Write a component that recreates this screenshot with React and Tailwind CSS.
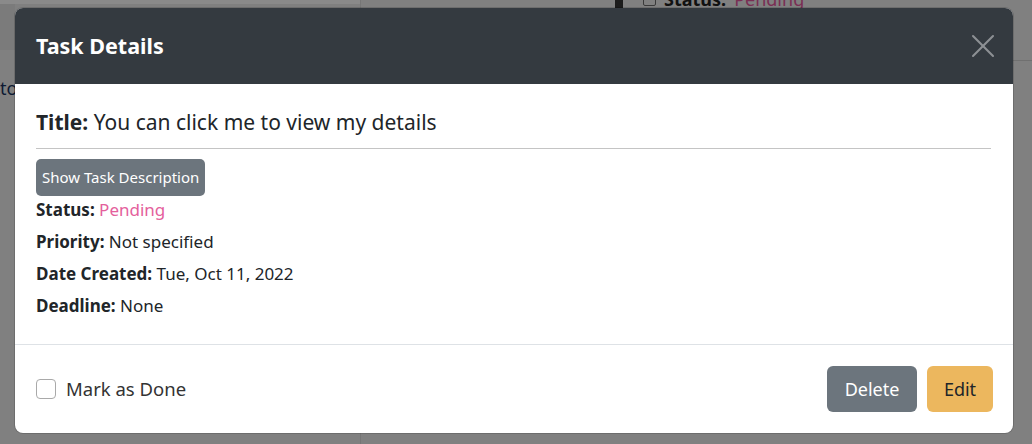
import { X } from 'lucide-react';

const Row = ({ label, children }) => (
    <div className="h-[24px] leading-[24px] text-[17px] text-[#212529]">
        <span className="font-bold">{label}</span> {children}
    </div>
);

const TaskModal = () => {
    return (
        <div className="absolute left-[15px] top-[8px] w-[998px] h-[425px] bg-white rounded-[8px] flex flex-col shadow-[0_0_0_1px_rgba(0,0,0,0.15)]">
            {/* Header */}
            <div className="h-[76px] shrink-0 bg-[#343a40] rounded-t-[8px] flex items-center justify-between pl-[21px] pr-[10px]">
                <h5 className="text-white text-[21.5px] font-bold">Task Details</h5>
                <button className="w-[40px] h-[40px] flex items-center justify-center text-[#8d9094]">
                    <X className="w-[40px] h-[40px]" strokeWidth={1.25} />
                </button>
            </div>

            {/* Body */}
            <div className="flex-1 px-[21px] pt-[24px]">
                <div className="text-[21px] leading-[28px] text-[#212529]">
                    <span className="font-bold">Title:</span> You can click me to view my details
                </div>
                <div className="h-px bg-[#c4c4c4] mt-[12px] mr-[1px]" />
                <button className="mt-[10px] mb-[2px] h-[37px] px-[6px] bg-[#6c757d] text-white text-[15px] rounded-[5px]">
                    Show Task Description
                </button>
                <div className="flex flex-col gap-[8px]">
                    <Row label="Status:">
                        <span className="text-[#e4609c]">Pending</span>
                    </Row>
                    <Row label="Priority:">Not specified</Row>
                    <Row label="Date Created:">Tue, Oct 11, 2022</Row>
                    <Row label="Deadline:">None</Row>
                </div>
            </div>

            {/* Footer */}
            <div className="h-[89px] shrink-0 border-t border-[#dee2e6] flex items-center justify-between pl-[21px] pr-[20px]">
                <label className="flex items-center gap-[10px] text-[18.5px] text-[#333]">
                    <span className="w-[20px] h-[20px] rounded-[4px] border border-[#a9a9a9] bg-white" />
                    Mark as Done
                </label>
                <div className="flex gap-[10px]">
                    <button className="h-[46px] w-[90px] bg-[#6c757d] text-white text-[18px] rounded-[6px]">Delete</button>
                    <button className="h-[46px] w-[66px] bg-[#ecb75e] text-[#212529] text-[18px] rounded-[6px]">Edit</button>
                </div>
            </div>
        </div>
    );
};

export default function App() {
    return (
        <div className="relative w-[1032px] h-[444px] overflow-hidden bg-[#808080] font-['Noto_Sans',sans-serif]">
            {/* page behind the backdrop */}
            <div className="flex h-full">
                <div className="w-[361px] border-r border-[#767676] flex flex-col">
                    <div className="h-[4px] bg-[#8a8a8a]" />
                    <div className="w-[15px] h-[46px] bg-[#7b7b7b]" />
                    <div className="text-[#0e1a33] text-[18px] leading-[24px] mt-[26px]">to</div>
                </div>
                <div className="flex-1 flex flex-col">
                    <div className="flex items-center gap-[8px] pl-[254px] -mt-[10px] h-[18px] text-[18px]">
                        <span className="w-[8px] h-[18px] bg-[#1c1c1c]" />
                        <span className="w-[13px] h-[13px] border border-[#3a3a3a] rounded-[2px] ml-[12px]" />
                        <span className="font-bold text-[#111]">Status:</span>
                        <span className="text-[#7a2e54]">Pending</span>
                    </div>
                    <div className="h-[52px]" />
                    <div className="h-px bg-[#707070]" />
                </div>
            </div>

            <div className="absolute inset-0">
                <TaskModal />
            </div>
        </div>
    );
}
